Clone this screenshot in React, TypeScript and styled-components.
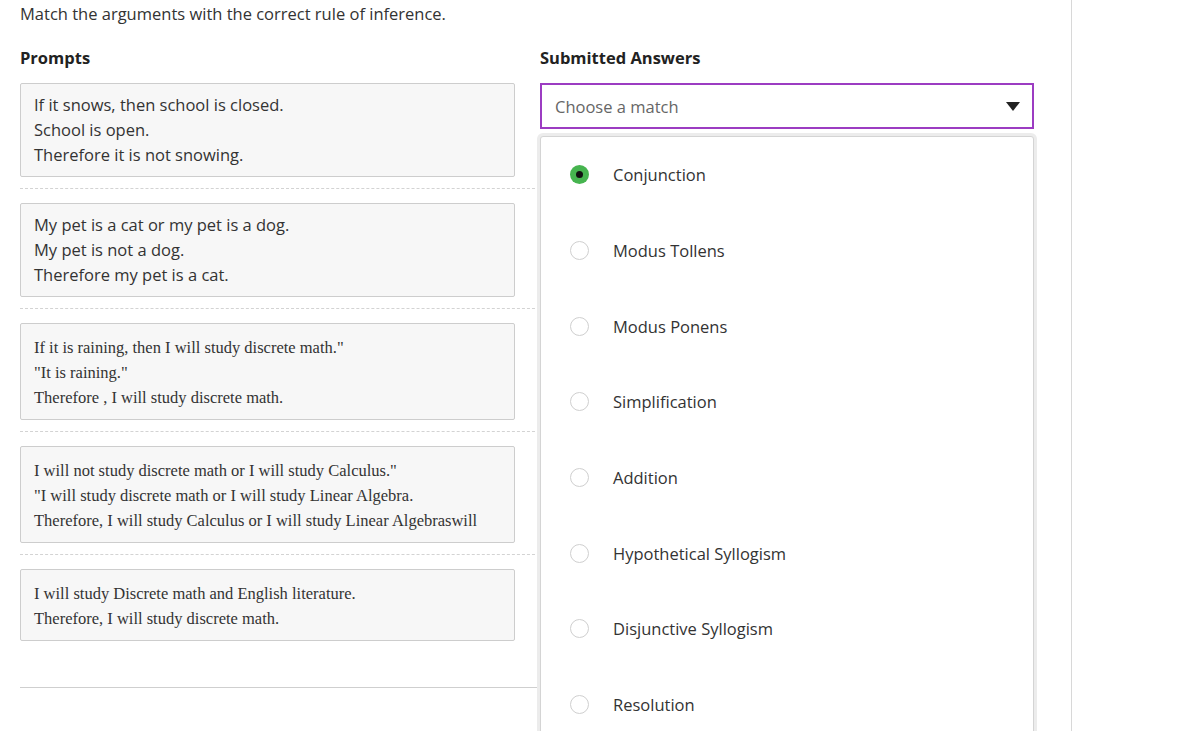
import React from "react";
import styled, { createGlobalStyle } from "styled-components";

const GlobalStyle = createGlobalStyle`
  html, body {
    margin: 0;
    padding: 0;
    overflow: hidden;
    background: #fff;
  }
  body {
    font-family: "Open Sans", "Liberation Sans", sans-serif;
    color: #333;
  }
`;

const Page = styled.div`
  display: flex;
  height: 731px;
`;

const Main = styled.div`
  width: 1015px;
  padding: 0 36px 0 20px;
  border-right: 1px solid #d8d8d8;
`;

const Instructions = styled.p`
  margin: 0;
  padding-top: 3px;
  font-size: 16.5px;
  line-height: 22px;
  color: #333;
`;

const Headings = styled.div`
  display: grid;
  grid-template-columns: 495px 494px;
  column-gap: 25px;
  margin-top: 22px;
  margin-bottom: 14px;
`;

const Heading = styled.h3`
  margin: 0;
  font-size: 16.5px;
  line-height: 22px;
  font-weight: 700;
  color: #222;
`;

const Rows = styled.div`
  display: flex;
  flex-direction: column;
  border-bottom: 1px solid #cfcfcf;
  padding-bottom: 46px;
  width: 520px;
`;

const Row = styled.div<{ $last?: boolean }>`
  display: grid;
  grid-template-columns: 495px 494px;
  column-gap: 25px;
  align-items: start;
  padding-bottom: ${({ $last }) => ($last ? "0" : "11px")};
  margin-bottom: ${({ $last }) => ($last ? "0" : "14px")};
  border-bottom: ${({ $last }) => ($last ? "none" : "1px dashed #d3d3d3")};
  width: 520px;
`;

const Prompt = styled.div<{ $serif?: boolean }>`
  background: #f7f7f7;
  border: 1px solid #cdcdcd;
  border-radius: 2px;
  padding: ${({ $serif }) => ($serif ? "11px 13px 9px" : "8px 13px 9px")};
  font-family: ${({ $serif }) =>
    $serif ? '"Liberation Serif", "Times New Roman", serif' : '"Open Sans", "Liberation Sans", sans-serif'};
  font-size: 16.5px;
  line-height: 25px;
  color: #333;
`;

const Line = styled.div`
  white-space: nowrap;
`;

const AnswerCell = styled.div`
  position: relative;
  width: 494px;
`;

const Select = styled.div`
  box-sizing: border-box;
  height: 46px;
  border: 2px solid #9c3cc2;
  background: #fff;
  display: flex;
  align-items: center;
  justify-content: space-between;
  padding: 0 12px 0 13px;
  font-size: 16.5px;
  color: #666;
`;

const Caret = styled.span`
  width: 0;
  height: 0;
  border-left: 7px solid transparent;
  border-right: 7px solid transparent;
  border-top: 9px solid #222;
  margin-top: 1px;
`;

const Dropdown = styled.ul`
  position: absolute;
  top: 53px;
  left: 0;
  width: 494px;
  box-sizing: border-box;
  margin: 0;
  padding: 0;
  list-style: none;
  background: #fff;
  border: 1px solid #d4d4d4;
  border-radius: 3px;
  box-shadow: 0 0 0 3px #ececec;
  z-index: 10;
`;

const Option = styled.li`
  display: flex;
  align-items: center;
  height: 75.7px;
  padding-left: 29px;
  font-size: 16.5px;
  color: #333;
`;

const Radio = styled.span<{ $checked?: boolean }>`
  box-sizing: border-box;
  width: 19px;
  height: 19px;
  border-radius: 50%;
  margin-right: 24px;
  flex-shrink: 0;
  display: flex;
  align-items: center;
  justify-content: center;
  border: ${({ $checked }) => ($checked ? "none" : "1.5px solid #cfcfcf")};
  background: ${({ $checked }) => ($checked ? "#46b44f" : "#fff")};
  &::after {
    content: "";
    display: ${({ $checked }) => ($checked ? "block" : "none")};
    width: 7px;
    height: 7px;
    border-radius: 50%;
    background: #111;
  }
`;

interface IPrompt {
  lines: string[];
  serif?: boolean;
}

const prompts: IPrompt[] = [
  {
    lines: ["If it snows, then school is closed.", "School is open.", "Therefore it is not snowing."],
  },
  {
    lines: ["My pet is a cat or my pet is a dog.", "My pet is not a dog.", "Therefore my pet is a cat."],
  },
  {
    serif: true,
    lines: [
      'If it is raining, then I will study discrete math."',
      '"It is raining."',
      "Therefore , I will study discrete math.",
    ],
  },
  {
    serif: true,
    lines: [
      'I will not study discrete math or I will study Calculus."',
      '"I will study discrete math or I will study Linear Algebra.',
      "Therefore, I will study Calculus or I will study Linear Algebraswill",
    ],
  },
  {
    serif: true,
    lines: ["I will study Discrete math and English literature.", "Therefore, I will study discrete math."],
  },
];

const options = [
  "Conjunction",
  "Modus Tollens",
  "Modus Ponens",
  "Simplification",
  "Addition",
  "Hypothetical Syllogism",
  "Disjunctive Syllogism",
  "Resolution",
];

const App = () => {
  return (
    <Page>
      <GlobalStyle />
      <Main>
        <Instructions>Match the arguments with the correct rule of inference.</Instructions>
        <Headings>
          <Heading>Prompts</Heading>
          <Heading>Submitted Answers</Heading>
        </Headings>
        <Rows>
          {prompts.map(({ lines, serif }, i) => (
            <Row key={i} $last={i === prompts.length - 1}>
              <Prompt $serif={serif}>
                {lines.map((l) => (
                  <Line key={l}>{l}</Line>
                ))}
              </Prompt>
              {i === 0 && (
                <AnswerCell>
                  <Select>
                    Choose a match
                    <Caret />
                  </Select>
                  <Dropdown>
                    {options.map((o, j) => (
                      <Option key={o}>
                        <Radio $checked={j === 0} />
                        {o}
                      </Option>
                    ))}
                  </Dropdown>
                </AnswerCell>
              )}
            </Row>
          ))}
        </Rows>
      </Main>
    </Page>
  );
};

export default App;
